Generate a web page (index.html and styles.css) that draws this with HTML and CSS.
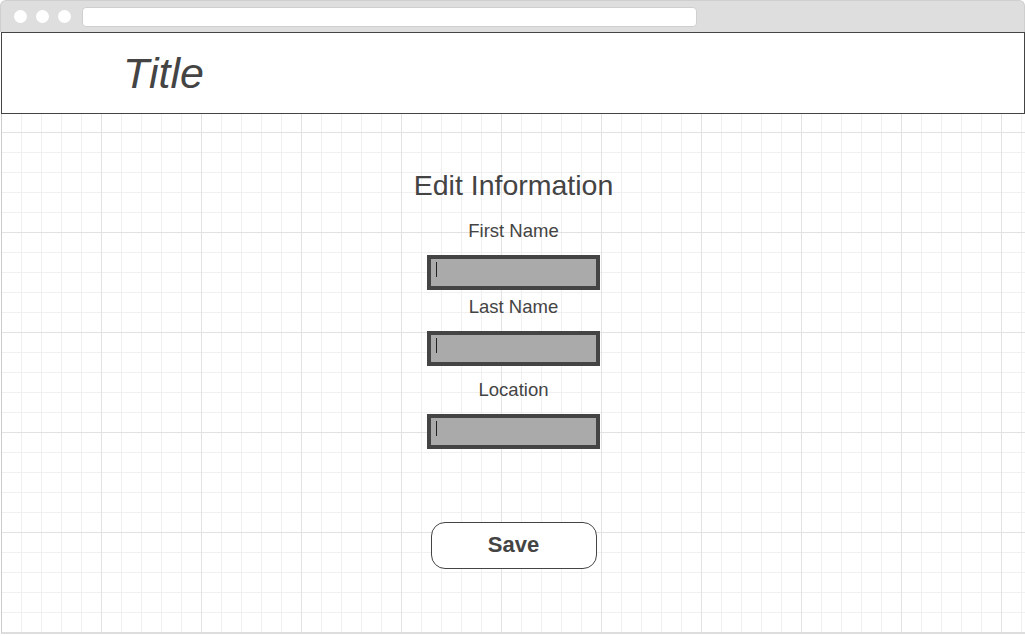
FILE: index.html
```html
<!DOCTYPE html>
<html>
<head>
<meta charset="utf-8">
<link rel="stylesheet" href="styles.css">
</head>
<body>
<div class="window">
  <div class="chrome">
    <span class="dot"></span><span class="dot"></span><span class="dot"></span>
    <div class="address"></div>
  </div>
  <div class="header">
    <h1 class="title">Title</h1>
  </div>
  <div class="canvas">
    <h2 class="heading">Edit Information</h2>
    <label class="label label-first">First Name</label>
    <div class="field"><span class="caret"></span></div>
    <label class="label label-next">Last Name</label>
    <div class="field"><span class="caret"></span></div>
    <label class="label label-loc">Location</label>
    <div class="field"><span class="caret"></span></div>
    <button class="save">Save</button>
  </div>
</div>
</body>
</html>
```
FILE: styles.css
```css
html, body {
  margin: 0;
  padding: 0;
  background: #fff;
  font-family: "Liberation Sans", Arial, sans-serif;
  color: #444;
}
.window {
  width: 1025px;
  height: 636px;
  display: flex;
  flex-direction: column;
  overflow: hidden;
}
.chrome {
  height: 32px;
  flex: none;
  background: #dedede;
  border: 1px solid #cfcfcf;
  border-bottom: none;
  border-radius: 6px 6px 0 0;
  display: flex;
  align-items: center;
  padding-left: 13px;
  box-sizing: border-box;
}
.dot {
  width: 13px;
  height: 13px;
  border-radius: 50%;
  background: #fff;
  margin-right: 9px;
}
.address {
  margin-left: 2px;
  width: 613px;
  height: 18px;
  background: #fff;
  border: 1px solid #cfcfcf;
  border-radius: 4px;
}
.header {
  height: 82px;
  flex: none;
  box-sizing: border-box;
  border: 1px solid #444;
  margin: 0 0 0 1px;
  background: #fff;
  display: flex;
  align-items: center;
}
.title {
  margin: 0 0 0 121px;
  font-size: 43px;
  font-style: italic;
  font-weight: normal;
  color: #444;
  line-height: 46px;
}
.canvas {
  flex: 1;
  margin-left: 1px;
  border-left: 1px solid #ccc;
  border-bottom: 2px solid #ddd;
  margin-bottom: 2px;
  display: flex;
  flex-direction: column;
  align-items: center;
  background-color: #fff;
  background-image:
    linear-gradient(to right, #e2e2e2 1px, transparent 1px),
    linear-gradient(to bottom, #e2e2e2 1px, transparent 1px),
    linear-gradient(to right, #f0f0f0 1px, transparent 1px),
    linear-gradient(to bottom, #f0f0f0 1px, transparent 1px);
  background-size: 100px 100px, 100px 100px, 20px 20px, 20px 20px;
  background-position: 99px 18px, 99px 18px, 19px 18px, 19px 18px;
}
.heading {
  margin: 55px 0 0 0;
  font-size: 28.5px;
  font-weight: normal;
  line-height: 32px;
  color: #444;
}
.label {
  font-size: 18.5px;
  line-height: 20px;
  color: #444;
}
.label-first { margin-top: 20px; }
.label-next { margin-top: 7px; }
.label-loc { margin-top: 14px; }
.field {
  margin-top: 14px;
  width: 173px;
  height: 35px;
  box-sizing: border-box;
  border: 4px solid #444;
  background: #aaa;
  padding: 3px 0 0 5px;
  display: flex;
  align-items: flex-start;
}
.caret {
  width: 1px;
  height: 15px;
  background: #222;
}
.save {
  margin-top: 73px;
  width: 166px;
  height: 47px;
  padding: 0 0 2px 0;
  border: 1px solid #444;
  border-radius: 14px;
  background: #fff;
  font-family: "Liberation Sans", Arial, sans-serif;
  font-size: 22px;
  font-weight: bold;
  color: #444;
}
```
